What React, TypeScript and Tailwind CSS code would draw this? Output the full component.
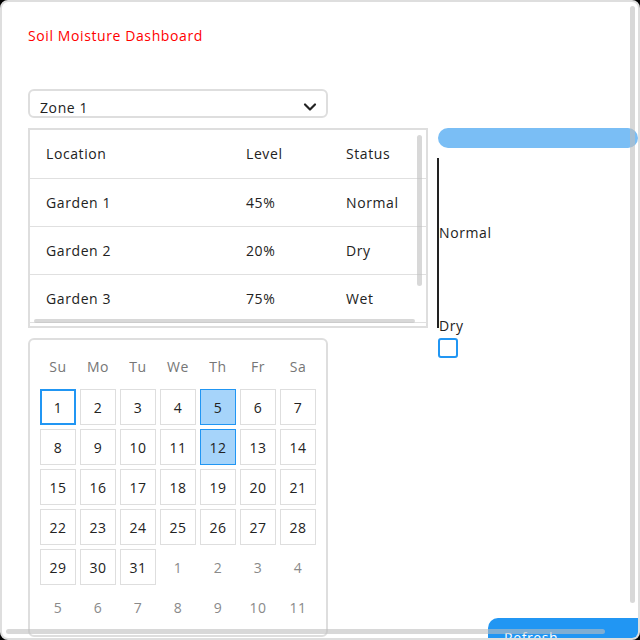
import { ChevronDown } from 'lucide-react'

// Soil moisture dashboard — zone picker, readings table, calendar and gauge

const READINGS = [
  { location: 'Garden 1', level: '45%', status: 'Normal' },
  { location: 'Garden 2', level: '20%', status: 'Dry' },
  { location: 'Garden 3', level: '75%', status: 'Wet' },
]

const WEEKDAYS = ['Su', 'Mo', 'Tu', 'We', 'Th', 'Fr', 'Sa']

// overlay scrollbar thumbs (the page's own bars are hidden when photographed)
const THUMB = 'absolute rounded-full bg-[rgba(190,190,190,0.6)] pointer-events-none'

type Day = { n: number; inMonth: boolean }

function buildDays(): Day[] {
  const days: Day[] = []
  for (let i = 1; i <= 31; i++) days.push({ n: i, inMonth: true })
  for (let i = 1; i <= 11; i++) days.push({ n: i, inMonth: false })
  return days
}

export default function App() {
  return (
    <div className="w-[640px] h-[640px] bg-black font-['Open_Sans',sans-serif] text-[14px] tracking-[0.6px] text-[#222]">
      <div className="relative w-full h-full bg-white border-2 border-[#dedede] rounded-[8px] overflow-hidden">
        <div className="w-full h-full overflow-auto">
          <div className="w-[656px] pl-[26px] pt-[24px] pb-[8px]">
            <h1 className="text-[14px] leading-[20px] text-[#ff0000]">Soil Moisture Dashboard</h1>

            <div className="mt-[43px] w-[300px] h-[29px] border-2 border-[#dedede] rounded-[6px] flex items-start justify-between pl-[10px] pr-[6px] pt-[9px]">
              <span className="leading-[16px]">Zone 1</span>
              <ChevronDown size={20} strokeWidth={2.6} className="mt-[-3px]" />
            </div>

            <div className="flex gap-[10px] mt-[10px]">
              {/* Columna izquierda */}
              <div className="w-[400px] flex flex-col">
                <div className="relative h-[200px] border-2 border-[#dedede]">
                  <div className="w-full h-full overflow-auto">
                    <table className="w-[400px] text-left border-collapse mb-[40px]">
                      <thead>
                        <tr className="h-[48px] border-b border-[#e0e0e0]">
                          <th className="w-[200px] px-[16px] font-normal">Location</th>
                          <th className="w-[100px] px-[16px] font-normal">Level</th>
                          <th className="w-[100px] px-[16px] font-normal">Status</th>
                        </tr>
                      </thead>
                      <tbody>
                        {READINGS.map((r) => (
                          <tr key={r.location} className="h-[48px] border-b border-[#e0e0e0]">
                            <td className="px-[16px]">{r.location}</td>
                            <td className="px-[16px]">{r.level}</td>
                            <td className="px-[16px]">{r.status}</td>
                          </tr>
                        ))}
                      </tbody>
                    </table>
                  </div>
                  <div className={`${THUMB} right-[4px] top-[5px] w-[5px] h-[151px]`} />
                  <div className={`${THUMB} left-[4px] bottom-[3px] h-[4px] w-[381px]`} />
                </div>

                <Calendar />
              </div>

              {/* Columna derecha */}
              <div className="w-[220px] flex flex-col items-start">
                <div className="w-[200px] h-[20px] rounded-full bg-[#7abef5]" />

                <div className="relative mt-[10px] ml-[-1px] h-[170px] w-[80px] border-l-2 border-[#222]">
                  <span className="absolute left-0 top-[65px] leading-[20px]">Normal</span>
                  <span className="absolute left-0 top-[158px] leading-[20px]">Dry</span>
                </div>

                <div className="mt-[10px] w-[20px] h-[20px] border-2 border-[#2196f3] rounded-[3px]" />

                <button className="ml-[50px] mt-[260px] w-[170px] h-[36px] rounded-[10px] bg-[#2196f3] text-white text-left pl-[16px] pt-[2px]">
                  Refresh
                </button>
              </div>
            </div>
          </div>
        </div>
        <div className={`${THUMB} right-[3px] top-[4px] w-[5px] h-[597px]`} />
        <div className={`${THUMB} left-[4px] bottom-[4px] h-[5px] w-[599px]`} />
      </div>
    </div>
  )
}

function Calendar() {
  const days = buildDays()
  return (
    <div className="mt-[10px] w-[300px] border-2 border-[#dedede] rounded-[6px] px-[10px] pt-[9px] pb-[10px]">
      <div className="grid grid-cols-7 gap-x-[4px] h-[36px] items-center mb-[4px]">
        {WEEKDAYS.map((d) => (
          <div key={d} className="text-center text-[#767676] leading-[20px] mt-[-1px]">
            {d}
          </div>
        ))}
      </div>
      <div className="grid grid-cols-7 gap-[4px]">
        {days.map((d, i) => {
          const today = d.inMonth && d.n === 1
          const selected = d.inMonth && (d.n === 5 || d.n === 12)
          let cls = 'border border-transparent text-[#8a8a8a]'
          if (d.inMonth) cls = 'border border-[#dedede] text-[#222]'
          if (selected) cls = 'border border-[#2196f3] bg-[#a6d4fa] text-[#222]'
          if (today) cls = 'border-2 border-[#2196f3] text-[#222]'
          return (
            <div key={i} className={`h-[36px] flex items-center justify-center ${cls}`}>
              {d.n}
            </div>
          )
        })}
      </div>
    </div>
  )
}
